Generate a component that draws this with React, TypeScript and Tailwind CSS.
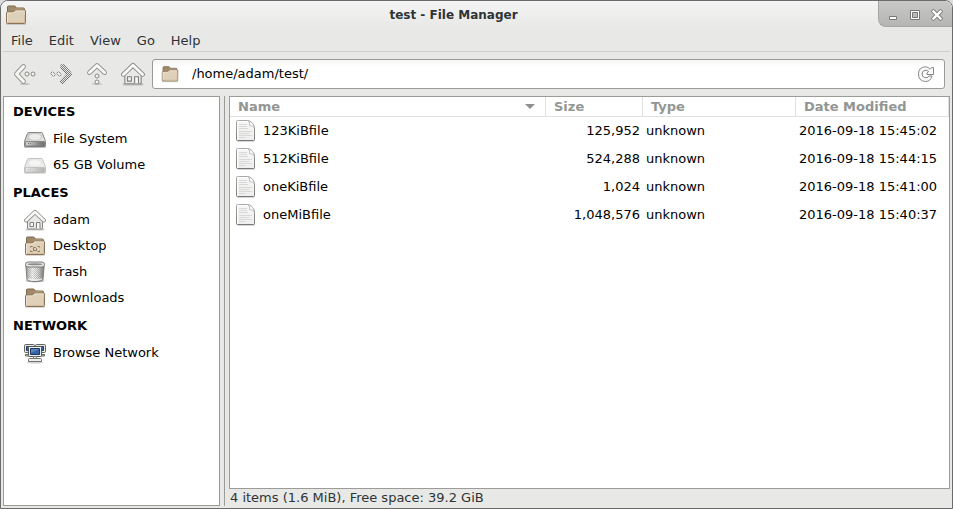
import React from "react";

const MENUS = ["File", "Edit", "View", "Go", "Help"];

const FILES = [
  { name: "123KiBfile", size: "125,952", type: "unknown", modified: "2016-09-18 15:45:02" },
  { name: "512KiBfile", size: "524,288", type: "unknown", modified: "2016-09-18 15:44:15" },
  { name: "oneKiBfile", size: "1,024", type: "unknown", modified: "2016-09-18 15:41:00" },
  { name: "oneMiBfile", size: "1,048,576", type: "unknown", modified: "2016-09-18 15:40:37" },
];

const GROUPS = [
  {
    title: "DEVICES",
    items: [
      { label: "File System", icon: <DriveIcon /> },
      { label: "65 GB Volume", icon: <DriveIcon faded /> },
    ],
  },
  {
    title: "PLACES",
    items: [
      { label: "adam", icon: <HomeIcon className="h-[22px] w-[22px]" /> },
      { label: "Desktop", icon: <FolderIcon className="h-[22px] w-[22px]" desktop /> },
      { label: "Trash", icon: <TrashIcon /> },
      { label: "Downloads", icon: <FolderIcon className="h-[22px] w-[22px]" /> },
    ],
  },
  {
    title: "NETWORK",
    items: [{ label: "Browse Network", icon: <NetworkIcon /> }],
  },
];

function FolderIcon({ className, desktop = false }: { className: string; desktop?: boolean }) {
  return (
    <svg className={className} viewBox="0 0 22 22" fill="none" aria-hidden="true">
      <rect x="1" y="18.500" width="20" height="2.500" rx="1" fill="#000" opacity="0.15" />
      <path d="M2.500 9V3q0-1 1-1h6q.7 0 1 .6l.9 1.400h7q1 0 1 1V9z" fill="#a08a6c" stroke="#80694a" />
      <path d="M10.500 4.500h8v2h-9z" fill="#bda888" />
      <path
        d="M1.500 9q0-1 1-1h6l1.800-2h9.200q1 0 1 1v11.500q0 1-1 1h-17q-1 0-1-1z"
        fill="#dfd0ba"
        stroke="#8b7355"
      />
      <path d="M2.500 18V9h6.500l1.800-2h8.700" stroke="#eee3d3" />
      <path d="M3 18.500h16.500V11" stroke="#d3bf9f" />
      {desktop && (
        <g stroke="#8a775d">
          <path d="M6.500 12.500v-1h2M13.500 11.500h2v1M15.500 15.500v1h-2M8.500 16.500h-2v-1" />
          <path d="M9.500 12.500h2l1 1v2h-3z" />
        </g>
      )}
    </svg>
  );
}

function HomeIcon({ className }: { className: string }) {
  return (
    <svg className={className} viewBox="0 0 22 22" fill="none" aria-hidden="true">
      <rect x="1.500" y="19.500" width="19" height="2" rx="1" fill="#000" opacity="0.2" />
      <path d="M3.500 11.500V19q0 1 1 1h13q1 0 1-1v-7.500L11 5z" fill="#e9e9e7" stroke="#858782" />
      <path d="M6 17.500v-4h3.500v4zM12.500 19.500v-6H16v6" fill="#f8f8f8" stroke="#7d7f7a" />
      <path d="M2.200 11.400L11 3l8.800 8.400" stroke="#8b8d88" strokeWidth="4.200" strokeLinecap="round" strokeLinejoin="round" />
      <path d="M2.200 11.400L11 3l8.800 8.400" stroke="#f8f8f7" strokeWidth="2.600" strokeLinecap="round" strokeLinejoin="round" />
    </svg>
  );
}

function DriveIcon({ faded = false }: { faded?: boolean }) {
  return (
    <svg className={faded ? "h-[22px] w-[22px] opacity-50" : "h-[22px] w-[22px]"} viewBox="0 0 22 22" fill="none" aria-hidden="true">
      <defs>
        <linearGradient id="drive-top" x1="0" y1="0" x2="1" y2="1">
          <stop stopColor="#c2c3c0" />
          <stop offset="1" stopColor="#f1f1f0" />
        </linearGradient>
        <linearGradient id="drive-front">
          <stop stopColor="#d3d4d1" />
          <stop offset="1" stopColor="#6c6e6a" />
        </linearGradient>
      </defs>
      <rect x="0" y="18" width="22" height="2" rx="1" fill="#000" opacity="0.25" />
      <path d="M4.500 4.500h13q.8 0 1 .8l3 8v4.700q0 .5-1 .5h-19q-1 0-1-.5v-4.700l3-8q.2-.8 1-.8z" fill="url(#drive-top)" stroke="#858783" />
      <ellipse cx="11" cy="9" rx="6.500" ry="3.500" fill="#ececeb" stroke="#cccdca" />
      <path d="M1.500 13.500h19v4.500h-19z" fill="url(#drive-front)" stroke="#666864" strokeWidth=".6" />
      <path d="M4 15.500h4M14 15.500h4" stroke="#7a7c78" strokeDasharray="1 1" />
    </svg>
  );
}

function TrashIcon() {
  return (
    <svg className="h-[22px] w-[22px]" viewBox="0 0 22 22" fill="none" aria-hidden="true">
      <defs>
        <linearGradient id="bin-side">
          <stop stopColor="#a5a6a3" />
          <stop offset=".35" stopColor="#f8f8f7" />
          <stop offset=".65" stopColor="#d6d7d5" />
          <stop offset="1" stopColor="#7d7f7b" />
        </linearGradient>
        <pattern id="bin-mesh" width="2" height="2" patternUnits="userSpaceOnUse">
          <path d="M0 0h1v1H0zM1 1h1v1H1z" fill="#555753" opacity=".25" />
        </pattern>
      </defs>
      <ellipse cx="11" cy="20" rx="10" ry="1.500" fill="#000" opacity="0.2" />
      <path d="M1.800 4L3 18.500q.3 2 8 2t8-2L20.200 4z" fill="url(#bin-side)" stroke="#7a7c78" />
      <path d="M2.500 6l1 10.500q7.500 3 15 0l1-10.500z" fill="url(#bin-mesh)" />
      <path d="M3.800 18q7.200 3 14.400 0" stroke="#efefee" />
      <rect x="1.500" y="1" width="19" height="5" rx="2.500" fill="#e9e9e7" stroke="#7a7c78" />
      <ellipse cx="11" cy="3.200" rx="7.500" ry="1" fill="#8a8c88" />
    </svg>
  );
}

function NetworkIcon() {
  return (
    <svg className="h-[22px] w-[22px]" viewBox="0 0 22 22" fill="none" aria-hidden="true">
      <ellipse cx="11" cy="20.500" rx="8" ry="1" fill="#000" opacity="0.18" />
      <g fill="#e4e5e2" stroke="#656762">
        <rect x=".5" y="2.500" width="10" height="8" rx="1" />
        <rect x="11.500" y="2.500" width="10" height="8" rx="1" />
        <path d="M1.500 12.500h5v1.500h-5zM15.500 12.500h5v1.500h-5z" />
      </g>
      <path d="M2.500 4.500h6v4h-6zM13.500 4.500h6v4h-6z" fill="#39629f" stroke="#243e6d" />
      <rect x="4.500" y="4.500" width="13" height="10" rx="1" fill="#eeeeec" stroke="#555753" />
      <path d="M6.500 6.500h9v6h-9z" fill="#3465a4" stroke="#1d3868" />
      <path d="M7 7h8L7 11z" fill="#5d84ba" />
      <path d="M9.500 14.500h3v2h-3zM4.500 17.500q0-1 1-1h11q1 0 1 1v2h-13z" fill="#eeeeec" stroke="#73756f" />
    </svg>
  );
}

function DocumentIcon() {
  return (
    <svg className="h-[22px] w-5 shrink-0" viewBox="0 0 20 22" fill="none" aria-hidden="true">
      <defs>
        <linearGradient id="sheet" x1="0" y1="0" x2="0" y2="1">
          <stop stopColor="#f7f7f7" />
          <stop offset="1" stopColor="#eeeeee" />
        </linearGradient>
        <linearGradient id="sheet-edge" x1="0" y1="0" x2="0" y2="1">
          <stop stopColor="#a8a8a6" />
          <stop offset="1" stopColor="#777875" />
        </linearGradient>
      </defs>
      <rect x="1" y="20" width="18" height="2" rx="1" fill="#000" opacity="0.15" />
      <path d="M2.500.5h9q2.500 0 4.500 2.200t2.500 4.800v12q0 1-1 1h-16q-1 0-1-1v-18q0-1 1-1z" fill="url(#sheet)" stroke="url(#sheet-edge)" />
      <path d="M1.500 19.500v-18h10" stroke="#fff" />
      <path d="M3 4.500h8M3 6.500h8M3 8.500h9M3 11.500h13M3 13.500h10M3 15.500h13M3 17.500h6" stroke="#d8d8d7" />
      <path d="M12.500 1q1.500 1.500 1 4.500 3 0 4.500 2-.3-5-5.500-6.500z" fill="#fff" stroke="#b3b4b1" strokeWidth=".8" />
    </svg>
  );
}

function ArrowIcon({ direction }: { direction: "back" | "forward" | "up" }) {
  const turn = { back: undefined, forward: "rotate(180 12 12)", up: "rotate(90 12 12)" }[direction];
  const muted = direction === "forward";
  return (
    <svg className="h-6 w-6" viewBox="0 0 24 24" fill="none" aria-hidden="true">
      <defs>
        <pattern id="dither" width="2" height="2" patternUnits="userSpaceOnUse">
          <path d="M0 0h1v1H0zM1 1h1v1H1z" fill="#fff" />
        </pattern>
        <mask id="dither-mask" maskUnits="userSpaceOnUse" x="0" y="0" width="24" height="24">
          <rect width="24" height="24" fill="url(#dither)" />
        </mask>
      </defs>
      {!muted && <ellipse cx="12" cy="22" rx="5" ry="1" fill="#000" opacity="0.15" />}
      <g mask={muted ? "url(#dither-mask)" : undefined}>
        <g transform={turn}>
          <path d="M10.500 4.500L3.500 12l7 7.500" stroke={muted ? "#5e605c" : "#92948f"} strokeWidth="4.800" strokeLinecap="round" strokeLinejoin="round" />
          <path d="M10.500 4.500L3.500 12l7 7.500" stroke={muted ? "#83857f" : "#f8f8f7"} strokeWidth="3" strokeLinecap="round" strokeLinejoin="round" />
          <g fill="#f5f5f4" stroke={muted ? "#5e605c" : "#888a85"}>
            <circle cx="14" cy="12" r="2" />
            <circle cx="20" cy="12" r="2" />
          </g>
        </g>
      </g>
    </svg>
  );
}

function ReloadIcon() {
  return (
    <svg className="h-4 w-4" viewBox="0 0 16 16" fill="none" strokeLinejoin="round" aria-hidden="true">
      <path
        d="M12 3.200L14 1.500h1.500v7H9V7l1.700-1.500Q9 4 7 4.300 4 5 4 8t3 3.700q2.500.4 4-1.700h3q-1.500 5.500-6.500 5.500Q.5 15 .5 8T7.500.8q2.700 0 4.500 2.400z"
        fill="#fbfbfb"
        stroke="#858783"
      />
    </svg>
  );
}

function TitleBar() {
  return (
    <header className="flex h-7 items-start bg-linear-to-b from-[#f4f4f4] to-[#e8e8e6] pl-1">
      <FolderIcon className="mt-[3px] h-[22px] w-[22px]" />
      <h1 className="flex-1 pl-0.5 text-center text-xs leading-7 font-bold text-[#2e3436]">test - File Manager</h1>
      <div className="flex h-[26px] w-[74px] items-center gap-[10px] rounded-bl-lg border-b border-l border-[#a5a5a3] bg-linear-to-b from-[#c9c9c8] to-[#b5b5b4] pt-0.5 pl-2">
        <button type="button" aria-label="Minimize">
          <svg className="h-3 w-3" viewBox="0 0 12 12" fill="#fff" stroke="#777">
            <path d="M2.500 7.500h7v3h-7z" />
          </svg>
        </button>
        <button type="button" aria-label="Maximize">
          <svg className="h-3 w-3" viewBox="0 0 12 12" fill="none" stroke="#777">
            <path d="M1.500 1.500h9v9h-9z" fill="#fff" />
            <path d="M3.500 3.500h5v5h-5z" fill="#bbb" />
          </svg>
        </button>
        <button type="button" aria-label="Close">
          <svg className="h-3 w-3" viewBox="0 0 12 12" fill="none" strokeLinecap="square">
            <path d="M2.500 2.500l7 7M9.500 2.500l-7 7" stroke="#777" strokeWidth="4" />
            <path d="M2.500 2.500l7 7M9.500 2.500l-7 7" stroke="#fff" strokeWidth="2.400" />
          </svg>
        </button>
      </div>
    </header>
  );
}

function Toolbar() {
  return (
    <div className="flex h-11 shrink-0 items-center pr-[7px] pl-1">
      <div className="flex gap-3 pl-2">
        <button type="button" aria-label="Back"><ArrowIcon direction="back" /></button>
        <button type="button" aria-label="Forward" disabled><ArrowIcon direction="forward" /></button>
        <button type="button" aria-label="Up"><ArrowIcon direction="up" /></button>
        <button type="button" aria-label="Home"><HomeIcon className="h-6 w-6" /></button>
      </div>
      <div className="ml-[7px] flex h-[30px] flex-1 items-center rounded-[3px] border border-[#9b9b97] bg-linear-to-b from-[#f6f6f6] to-white to-25% px-2">
        <FolderIcon className="h-[18px] w-[18px]" />
        <input
          type="text"
          aria-label="Location"
          defaultValue="/home/adam/test/"
          className="ml-[13px] h-full min-w-0 flex-1 bg-transparent pb-0.5 text-black outline-none"
        />
        <button type="button" aria-label="Reload" className="mr-[2px]"><ReloadIcon /></button>
      </div>
    </div>
  );
}

function Sidebar() {
  return (
    <nav className="w-[217px] shrink-0 border border-[#9b9b97] bg-white text-black" aria-label="Places">
      {GROUPS.map((group) => (
        <section key={group.title}>
          <h2 className="pl-[9px] leading-[29px] font-bold">{group.title}</h2>
          <ul>
            {group.items.map((item) => (
              <li key={item.label}>
                <a href="#" className="flex h-[26px] items-center gap-[7px] pl-5">
                  {item.icon}
                  <span>{item.label}</span>
                </a>
              </li>
            ))}
          </ul>
        </section>
      ))}
    </nav>
  );
}

function FileList() {
  return (
    <div className="flex-1 border border-[#9b9b97] bg-white">
      <table className="w-full table-fixed border-separate border-spacing-0 text-left text-black">
        <colgroup>
          <col />
          <col className="w-[97px]" />
          <col className="w-[153px]" />
          <col className="w-[153px]" />
        </colgroup>
        <thead>
          <tr className="h-5 leading-[19px] text-[#929693]">
            <th className="border-r border-b border-[#e1e1e0] p-0 pl-2">
              <div className="flex items-center justify-between pr-[10px]">
                Name
                <svg className="h-[5px] w-[10px]" viewBox="0 0 10 5" fill="#8e918e" aria-hidden="true">
                  <path d="M0 0h10L5 5z" />
                </svg>
              </div>
            </th>
            <th className="border-r border-b border-[#e1e1e0] p-0 pl-2">Size</th>
            <th className="border-r border-b border-[#e1e1e0] p-0 pl-2">Type</th>
            <th className="border-r border-b border-[#e1e1e0] p-0 pl-2">Date Modified</th>
          </tr>
        </thead>
        <tbody>
          {FILES.map((file) => (
            <tr key={file.name} className="h-7 leading-6">
              <td className="p-0 pl-[6px]">
                <div className="flex items-center gap-[7px]">
                  <DocumentIcon />
                  {file.name}
                </div>
              </td>
              <td className="p-0 pr-[3px] text-right">{file.size}</td>
              <td className="p-0 pl-[3px]">{file.type}</td>
              <td className="p-0 pl-[3px] whitespace-nowrap">{file.modified}</td>
            </tr>
          ))}
        </tbody>
      </table>
    </div>
  );
}

export default function App() {
  return (
    <div className="bg-[#dcdcdc]">
      <div className="flex min-h-screen flex-col overflow-hidden rounded-t-lg border border-[#6b6b6b] bg-[#e8e8e6] font-['DejaVu_Sans',sans-serif] text-[13px] text-[#2e3436]">
        <TitleBar />
        <div className="mx-0.5 flex h-[23px] shrink-0 items-center gap-4 border-b border-[#cececb] pt-0.5 pl-2">
          {MENUS.map((menu) => (
            <button key={menu} type="button">{menu}</button>
          ))}
        </div>
        <Toolbar />
        <div className="flex flex-1 px-0.5 pb-0.5">
          <Sidebar />
          <div className="mx-1 w-px bg-[#9b9b97]" />
          <main className="flex min-w-0 flex-1 flex-col">
            <FileList />
            <footer className="h-[17px] pl-px leading-[17px]">4 items (1.6 MiB), Free space: 39.2 GiB</footer>
          </main>
        </div>
      </div>
    </div>
  );
}
